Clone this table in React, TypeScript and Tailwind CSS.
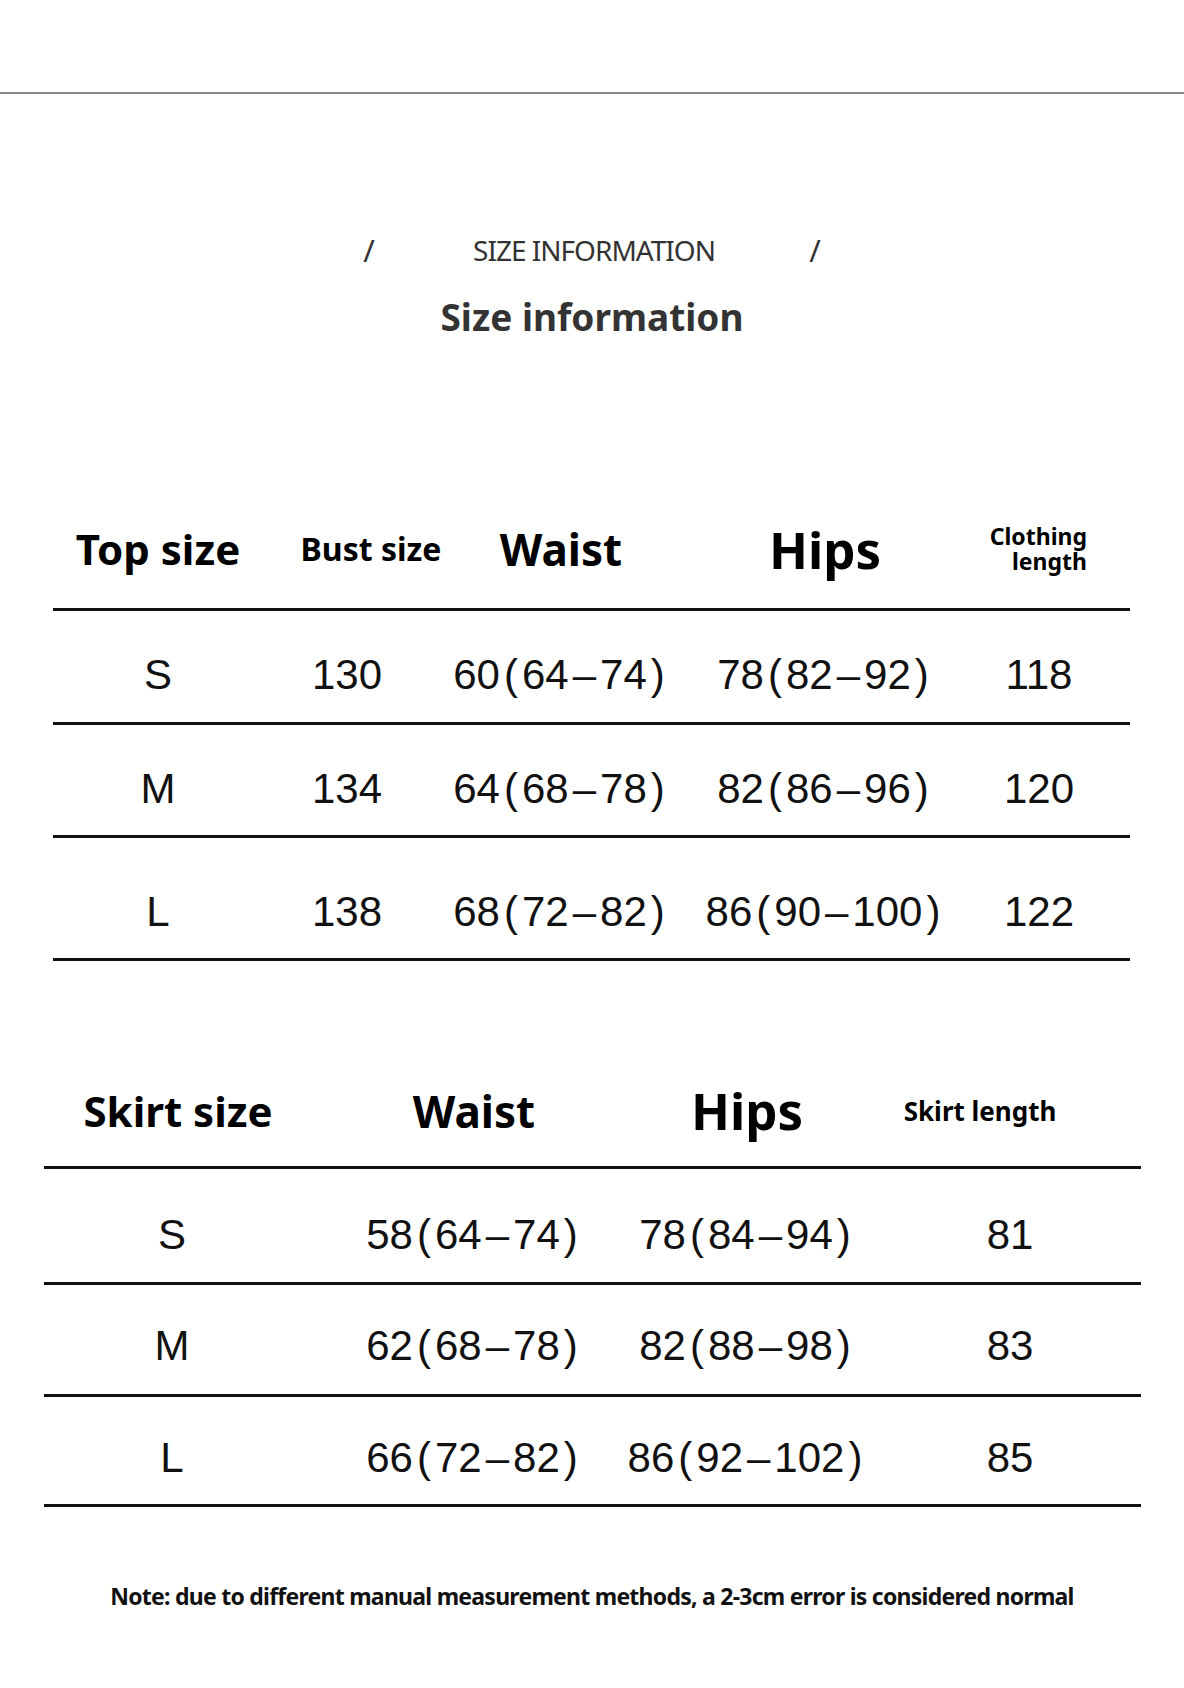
import React from "react";

type Row = { cells: string[]; pt: string; h: string };

const topRows: Row[] = [
  { cells: ["S", "130", "60(64–74)", "78(82–92)", "118"], h: "h-[114px]", pt: "pt-[17px]" },
  { cells: ["M", "134", "64(68–78)", "82(86–96)", "120"], h: "h-[113px]", pt: "pt-[17px]" },
  { cells: ["L", "138", "68(72–82)", "86(90–100)", "122"], h: "h-[123px]", pt: "pt-[27px]" },
];

const skirtRows: Row[] = [
  { cells: ["S", "58(64–74)", "78(84–94)", "81"], h: "h-[116px]", pt: "pt-[18px]" },
  { cells: ["M", "62(68–78)", "82(88–98)", "83"], h: "h-[112px]", pt: "pt-[12px]" },
  { cells: ["L", "66(72–82)", "86(92–102)", "85"], h: "h-[110px]", pt: "pt-[14px]" },
];

const head = "font-['Noto_Sans',sans-serif] font-bold text-black whitespace-nowrap";
const val =
  "flex justify-center font-['Liberation_Sans',Arial,sans-serif] text-[42px] leading-none text-[#111] whitespace-nowrap";

// brackets and dashes sit a little looser in the source sheet
function Value({ text }: { text: string }) {
  const parts = text.split(/([()–])/).filter(Boolean);
  return (
    <span>
      {parts.map((p, i) =>
        p === "(" || p === ")" || p === "–" ? (
          <span key={i} className="mx-[4px]">
            {p}
          </span>
        ) : (
          <span key={i}>{p}</span>
        )
      )}
    </span>
  );
}

function TopTable() {
  return (
    <div className="ml-[53px] w-[1077px]">
      <div className="grid grid-cols-[210px_168px_260px_268px_171px] h-[117px] items-center pb-[4px] border-b-[3px] border-[#111]">
        <div className={`${head} leading-none text-[42px] text-center`}>Top size</div>
        <div className={`${head} leading-none text-[32px] text-center pl-[24px] -mr-[24px]`}>Bust size</div>
        <div className={`${head} leading-none text-[44px] text-center`}>Waist</div>
        <div className={`${head} leading-none text-[51px] text-center`}>Hips</div>
        <div className="flex justify-end pr-[43px]">
          <div className={`${head} text-[23px] text-right leading-[25px]`}>
            <div>Clothing</div>
            <div>length</div>
          </div>
        </div>
      </div>
      {topRows.map((r) => (
        <div
          key={r.cells[0]}
          className={`grid grid-cols-[210px_168px_260px_268px_171px] items-center border-b-[3px] border-[#111] ${r.h} ${r.pt}`}
        >
          {r.cells.map((c, i) => (
            <div key={i} className={`${val} ${i === 4 ? "pr-[11px]" : ""}`}>
              <Value text={c} />
            </div>
          ))}
        </div>
      ))}
    </div>
  );
}

function SkirtTable() {
  return (
    <div className="ml-[44px] w-[1097px]">
      <div className="grid grid-cols-[256px_348px_198px_295px] h-[117px] items-center pt-[3px] border-b-[3px] border-[#111]">
        <div className={`${head} leading-none text-[42px] text-center pl-[12px]`}>Skirt size</div>
        <div className={`${head} leading-none text-[44px] text-center`}>Waist</div>
        <div className={`${head} leading-none text-[51px] text-center`}>Hips</div>
        <div className={`${head} leading-none text-[26px] text-center pr-[27px]`}>Skirt length</div>
      </div>
      {skirtRows.map((r) => (
        <div
          key={r.cells[0]}
          className={`grid grid-cols-[256px_348px_198px_295px] items-center border-b-[3px] border-[#111] ${r.h} ${r.pt}`}
        >
          {r.cells.map((c, i) => (
            <div key={i} className={`${val} ${i === 3 ? "pl-[33px]" : ""}`}>
              <Value text={c} />
            </div>
          ))}
        </div>
      ))}
    </div>
  );
}

export default function App() {
  return (
    <div className="w-[1184px] h-[1688px] bg-white overflow-hidden flex flex-col">
      <div className="h-[92px]" />
      <div className="h-[2px] bg-[#8a8a8a]" />

      {/* title */}
      <div className="mt-[141px] h-[30px] flex items-center justify-center text-[#333] font-['Noto_Sans',sans-serif]">
        <span className="text-[31px] leading-none w-[20px] text-center mr-[94px]">/</span>
        <span className="text-[28px] leading-none tracking-[-1px] uppercase">Size information</span>
        <span className="text-[31px] leading-none w-[20px] text-center ml-[90px]">/</span>
      </div>
      <div className="mt-[29px] h-[44px] flex items-center justify-center font-['Noto_Sans',sans-serif] font-bold text-[37px] text-[#333] leading-none">
        Size information
      </div>

      <div className="mt-[156px]">
        <TopTable />
      </div>

      <div className="mt-[91px]">
        <SkirtTable />
      </div>

      <div className="mt-[74px] h-[30px] flex items-center justify-center font-['Noto_Sans',sans-serif] font-bold text-[23px] tracking-[-0.75px] text-[#111] leading-none whitespace-nowrap">
        Note: due to different manual measurement methods, a 2-3cm error is considered normal
      </div>
    </div>
  );
}
